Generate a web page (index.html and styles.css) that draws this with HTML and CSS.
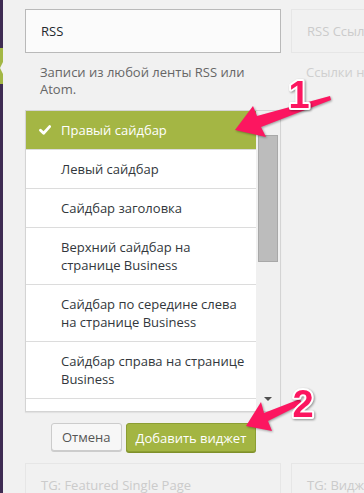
FILE: index.html
```html
<!DOCTYPE html>
<html lang="ru">
<head>
    <meta charset="UTF-8">
    <meta name="viewport" content="width=device-width, initial-scale=1.0">
    <title>Виджеты</title>
    <link rel="stylesheet" href="styles.css">
</head>
<body>
    <div class="page">
        <div class="menu-edge">
            <svg class="menu-current" width="3" height="40" viewBox="0 0 3 40">
                <rect x="0" y="0" width="3" height="36" fill="#a3b745"/>
                <polygon points="3,14 0,20 3,26" fill="#f1f1f1"/>
            </svg>
        </div>

        <div class="widgets">
            <!-- top row: open widget on the left, next widget on the right -->
            <div class="widget-title">RSS</div>
            <div class="widget-title faded">RSS Ссылки</div>

            <p class="widget-desc">Записи из любой ленты RSS или<br>Atom.</p>
            <p class="widget-desc faded">Ссылки на записи</p>

            <div class="chooser-wrap">
                <div class="chooser">
                    <ul class="sidebars">
                        <li class="selected">
                            <span class="check">
                                <svg width="12" height="10" viewBox="0 0 12 10">
                                    <path d="M1.5 5.2 L4.6 8.2 L10.6 1.6" fill="none" stroke="#fff" stroke-width="2.8" stroke-linecap="round" stroke-linejoin="round"/>
                                </svg>
                            </span>Правый сайдбар
                        </li>
                        <li>Левый сайдбар</li>
                        <li>Сайдбар заголовка</li>
                        <li>Верхний сайдбар на странице Business</li>
                        <li>Сайдбар по середине слева на странице Business</li>
                        <li>Сайдбар справа на странице Business</li>
                        <li>Нижний сайдбар</li>
                    </ul>
                    <div class="scrollbar">
                        <div class="thumb"></div>
                        <span class="scroll-down"></span>
                    </div>
                </div>

                <div class="actions">
                    <button class="btn">Отмена</button>
                    <button class="btn btn-primary">Добавить виджет</button>
                </div>
            </div>

            <div class="widget-title faded bottom-left">TG: Featured Single Page</div>
            <div class="widget-title faded bottom-right">TG: Виджет записей</div>
        </div>

        <!-- callout arrows drawn over the screenshot -->
        <svg class="callouts" width="364" height="493" viewBox="0 0 364 493">
            <g class="arrow">
                <polygon points="235,130 253,106 257,116 330,96 331,100 261,127 266,137"/>
                <polygon points="246,426 261,402 264,413 300,399 302,404 268,421 272,431"/>
            </g>
            <text class="callout-num" x="299" y="108">1</text>
            <text class="callout-num" x="303" y="417">2</text>
        </svg>
    </div>
</body>
</html>
```

FILE: styles.css
```css
* {
    margin: 0;
    padding: 0;
    box-sizing: border-box;
}

body {
    font-family: 'Open Sans', 'Noto Sans', sans-serif;
    font-size: 13px;
    background: #f1f1f1;
    color: #32373c;
}

.page {
    position: relative;
    width: 364px;
    height: 493px;
    overflow: hidden;
    display: flex;
}

.menu-edge {
    width: 3px;
    flex: none;
    background: #3f2c53;
}

.menu-current {
    display: block;
    margin-top: 48px;
}

.widgets {
    flex: none;
    display: grid;
    grid-template-columns: 256px 256px;
    column-gap: 10px;
    align-items: start;
    padding: 9px 0 0 22px;
}

.widget-title {
    height: 44px;
    line-height: 42px;
    padding: 0 15px;
    background: #fbfbfb;
    border: 1px solid #b9b9b9;
    color: #23282d;
    white-space: nowrap;
    overflow: hidden;
}

.widget-title.faded {
    background: #f1f1f1;
    border-color: #e6e6e6;
    color: #cbcbcb;
}

.bottom-left {
    grid-column: 1;
    grid-row: 4;
}

.bottom-right {
    grid-column: 2;
    grid-row: 4;
}

.widget-desc {
    margin-top: 11px;
    padding: 0 15px;
    line-height: 17px;
    color: #666;
    white-space: nowrap;
}

.widget-desc.faded {
    color: #cfcfcf;
}

.chooser-wrap {
    grid-column: 1;
    grid-row: 3;
    margin-top: 12px;
}

.chooser {
    display: flex;
    height: 302px;
    border: 1px solid #d4d4d4;
    box-shadow: 0 1px 1px rgba(0, 0, 0, 0.06);
    background: #fff;
}

.sidebars {
    list-style: none;
    flex: 1;
    overflow: hidden;
}

.sidebars li {
    padding: 10px 10px 10px 35px;
    line-height: 18px;
    border-top: 1px solid #dcdcdc;
}

.sidebars li:first-child {
    border-top: none;
}

.sidebars li.selected {
    padding-left: 13px;
    background: #a4b644;
    color: #fff;
}

.check {
    display: inline-block;
    width: 22px;
}

.scrollbar {
    width: 24px;
    flex: none;
    display: flex;
    flex-direction: column;
    align-items: center;
    background: #f0f0f0;
    padding: 24px 0 10px;
}

.thumb {
    width: 20px;
    height: 127px;
    background: #bcbcbc;
    border: 1px solid #a8a8a8;
}

.scroll-down {
    margin-top: auto;
    width: 0;
    height: 0;
    border-left: 4px solid transparent;
    border-right: 4px solid transparent;
    border-top: 4px solid #505050;
}

.actions {
    display: flex;
    gap: 4px;
    margin: 11px 0 11px 26px;
    align-items: flex-start;
}

.btn {
    font-family: inherit;
    font-size: 13px;
    height: 28px;
    padding: 0 10px;
    border: 1px solid #cccccc;
    border-radius: 3px;
    background: #f7f7f7;
    color: #555;
    box-shadow: 0 1px 0 #cccccc;
}

.btn-primary {
    height: 29px;
    padding: 0 9px;
    background: #a3b542;
    border-color: #8c9e33;
    color: #fff;
    box-shadow: 0 1px 0 #7f9029;
}

.callouts {
    position: absolute;
    top: 0;
    left: 0;
    pointer-events: none;
}

.arrow {
    fill: #fc1660;
    filter: drop-shadow(1px 1px 1px rgba(0, 0, 0, 0.35));
}

.callout-num {
    font-family: 'Liberation Sans', Arial, sans-serif;
    font-weight: bold;
    font-size: 38px;
    text-anchor: middle;
    fill: #fc1660;
    stroke: #fff;
    stroke-width: 4px;
    stroke-linejoin: round;
    paint-order: stroke;
    filter: drop-shadow(1px 1px 1px rgba(0, 0, 0, 0.4));
}
```
